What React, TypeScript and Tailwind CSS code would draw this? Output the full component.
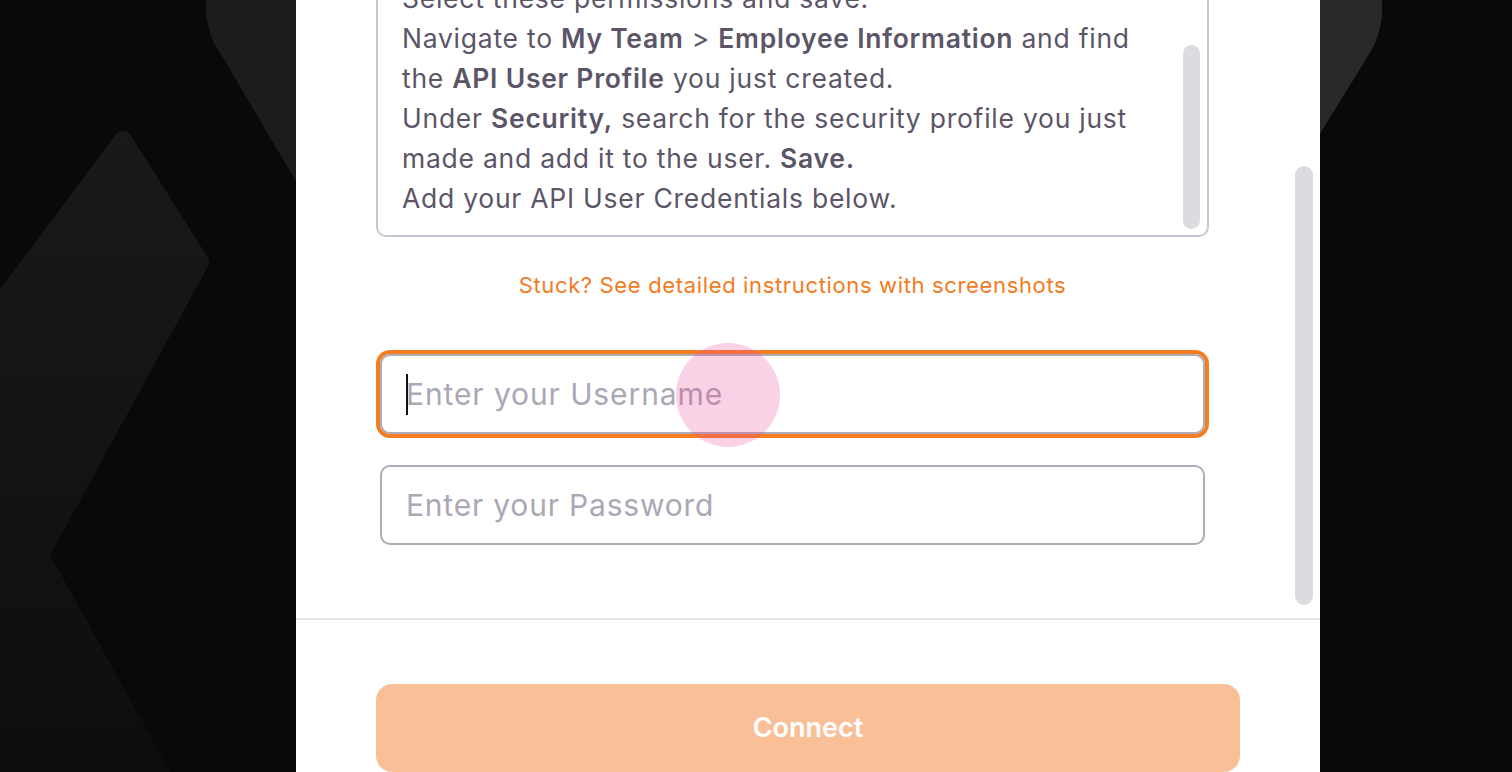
import React from "react";

function Backdrop() {
  return (
    <svg className="absolute inset-0 h-full w-full" viewBox="0 0 1512 772" preserveAspectRatio="none">
      <defs>
        <linearGradient id="leftShape" x1="0" y1="0" x2="0" y2="1">
          <stop offset="0" stopColor="#19191b" />
          <stop offset="1" stopColor="#0d0d0f" />
        </linearGradient>
      </defs>
      <polygon
        points="-60,385 123,140 200,262 40,555 175,800 -60,800"
        fill="url(#leftShape)"
        stroke="url(#leftShape)"
        strokeWidth="18"
        strokeLinejoin="round"
      />
      <path d="M206 -10 L206 10 Q208 38 222 56 L310 205 L310 -10 Z" fill="#1c1c1e" />
      <path d="M1382 -10 L1382 15 Q1380 38 1368 56 L1305 158 L1305 -10 Z" fill="#29292a" />
    </svg>
  );
}

export default function App() {
  return (
    <div
      className="relative h-[772px] w-full overflow-hidden bg-[#08090b]"
      style={{ fontFamily: "Inter, 'Noto Sans', sans-serif" }}
    >
      <Backdrop />

      <div className="relative ml-[296px] flex h-full w-[1024px] flex-col bg-white">
        {/* scrollable body */}
        <div className="flex h-[618px] overflow-hidden">
          <div className="flex flex-1 flex-col pl-20 pr-[86px]">
            <div className="relative mt-[-42px] rounded-[10px] border-2 border-[#c9c6d1] pb-[17px] pl-6 pr-14 pt-[18px] text-[26.5px] leading-[40px] tracking-[0.75px] text-[#5b5567]">
              <p>Select these permissions and save.</p>
              <p>
                Navigate to <b className="font-semibold">My Team</b> &gt; <b className="font-semibold">Employee Information</b> and find
              </p>
              <p>
                the <b className="font-semibold">API User Profile</b> you just created.
              </p>
              <p>
                Under <b className="font-semibold">Security,</b> search for the security profile you just
              </p>
              <p>
                made and add it to the user. <b className="font-semibold">Save.</b>
              </p>
              <p>Add your API User Credentials below.</p>
              <div className="absolute bottom-[6px] right-[7px] h-[184px] w-[17px] rounded-full bg-[#dcdbe0]" />
            </div>

            <a className="mt-[34px] text-center text-[22px] leading-[28px] tracking-[0.65px] text-[#f47b20]">
              Stuck? See detailed instructions with screenshots
            </a>

            <div className="mt-[55px] flex flex-col gap-[31px] px-1">
              <div className="relative flex h-[80px] items-center rounded-[10px] border-2 border-[#aeacb8] pl-6 shadow-[0_0_0_4px_#f47d22]">
                <span className="-mr-[2px] h-[41px] w-[2px] bg-[#111]" />
                <span className="text-[30px] tracking-[0.9px] text-[#aaa8b5]">Enter your Username</span>
                <span className="absolute left-[294px] top-[-13px] h-[104px] w-[104px] rounded-full bg-[#ec4899]/25" />
              </div>
              <div className="flex h-[80px] items-center rounded-[10px] border-2 border-[#aeacb8] pl-6">
                <span className="text-[30px] tracking-[0.8px] text-[#aaa8b5]">Enter your Password</span>
              </div>
            </div>
          </div>
          <div className="mr-[7px] mt-[166px] h-[439px] w-[18px] rounded-full bg-[#dcdbe0]" />
        </div>

        <div className="h-[2px] bg-[#e4e3e8]" />

        {/* footer */}
        <div className="px-20 pt-16">
          <button className="h-[88px] w-full rounded-2xl bg-[#f9c098] text-[27px] font-semibold text-white">
            Connect
          </button>
        </div>
      </div>
    </div>
  );
}
